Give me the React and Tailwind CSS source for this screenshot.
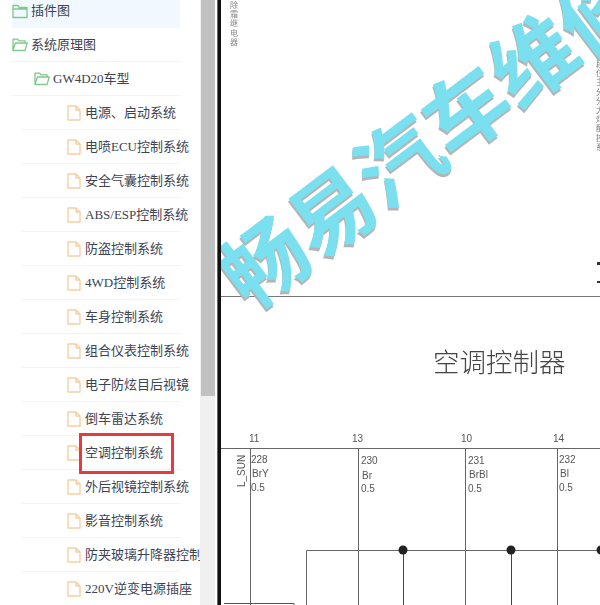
const SERIF = '"Liberation Serif","Noto Sans CJK SC",serif';
const SANS = '"Liberation Sans","Noto Sans CJK SC",sans-serif';

function FolderIcon({ open }) {
  return (
    <svg width="16" height="15" viewBox="0 0 16 15" fill="none" stroke="#7fc98a" strokeWidth="1.3" strokeLinejoin="round" className="shrink-0">
      {open ? (
        <path d="M1 13.5V2.2h4.6l1.3 1.6h6.2v2.2M1 13.5l2.4-7.5h11.8l-2.2 7.5z" />
      ) : (
        <path d="M1 13.5V1.5h5l1.2 2H15v10zM1 5h14" />
      )}
    </svg>
  );
}

function FileIcon() {
  return (
    <svg width="14" height="16" viewBox="0 0 14 16" fill="none" stroke="#f5cfa3" strokeWidth="1.4" strokeLinejoin="round" className="shrink-0">
      <path d="M1 1h8l4 4v10H1zM9 1v4h4" />
    </svg>
  );
}

const files = [
  '电源、启动系统',
  '电喷ECU控制系统',
  '安全气囊控制系统',
  'ABS/ESP控制系统',
  '防盗控制系统',
  '4WD控制系统',
  '车身控制系统',
  '组合仪表控制系统',
  '电子防炫目后视镜',
  '倒车雷达系统',
  '空调控制系统',
  '外后视镜控制系统',
  '影音控制系统',
  '防夹玻璃升降器控制系统',
  '220V逆变电源插座',
];

function Sidebar() {
  return (
    <div className="relative h-[605px] w-[200px] shrink-0 overflow-hidden bg-white text-[13px] text-[#3c4353]" style={{ fontFamily: SERIF }}>
      <div className="mt-[-6px]">
        <div className="ml-3 mr-5 flex h-[34px] items-center gap-[3px] whitespace-nowrap bg-[#f1f8fe]">
          <FolderIcon />
          <span>插件图</span>
        </div>
        <div className="ml-3 mr-5 flex h-[34px] items-center gap-[3px] whitespace-nowrap border-b border-[#f2f2f2]">
          <FolderIcon open />
          <span>系统原理图</span>
        </div>
        <div className="ml-3 mr-5 flex h-[34px] items-center gap-[3px] whitespace-nowrap border-b border-[#f2f2f2] pl-[22px]">
          <FolderIcon open />
          <span>GW4D20车型</span>
        </div>
        {files.map((f) => (
          <div key={f} className="ml-[22px] mr-5 flex h-[34px] items-center gap-1 whitespace-nowrap border-b border-[#f2f2f2] pl-[45px]">
            <FileIcon />
            <span>{f}</span>
          </div>
        ))}
      </div>
      <div className="absolute left-[79px] top-[433px] h-[41px] w-[95px] border-[3px] border-[#e33b3f]" />
    </div>
  );
}

function Scrollbar() {
  return (
    <div className="flex h-[605px] w-[15px] shrink-0 flex-col bg-[#f0f0f0] pl-[1px]">
      <div className="h-[396px] bg-[#c1c1c1]" />
    </div>
  );
}

function Diagram() {
  const t = { fontFamily: SANS, fontSize: 10, fill: '#555' };
  return (
    <svg width="379" height="605" viewBox="221 0 379 605" className="block blur-[0.3px]">
      <g fill="#888" style={{ fontFamily: SANS, fontSize: 8 }}>
        {['除', '霜', '继', '电', '器'].map((c, i) => (
          <text key={c} x="230" y={8 + i * 9.2}>{c}</text>
        ))}
        {['段', '位', '主', '分', '分', '大', '灯', '配', '控', '系'].map((c, i) => (
          <text key={i} x="596" y={67 + i * 9.2} fill="#777">{c}</text>
        ))}
      </g>
      <rect x="597" y="262" width="3" height="3" fill="#333" />
      <rect x="597" y="281" width="3" height="2" fill="#333" />
      <path d="M221 296.5H600" stroke="#777" strokeWidth="1" />
      <text x="433" y="372" style={{ fontFamily: '"Noto Sans CJK SC",sans-serif', fontSize: 26.5, fontWeight: 300 }} fill="#444">空调控制器</text>
      <path d="M221 448.5H600" stroke="#666" strokeWidth="1" />
      <path d="M250.5 448V605M358.5 448V605M465.5 448V605M557.5 448V605" stroke="#666" strokeWidth="1" />
      <path d="M306.500 605V550.500H600" fill="none" stroke="#666" strokeWidth="1" />
      <path d="M403.500 550V605M511.500 550V605" stroke="#444" strokeWidth="1" />
      <circle cx="403" cy="550" r="4.500" fill="#222" />
      <circle cx="511" cy="550" r="4.500" fill="#222" />
      <circle cx="601" cy="550" r="4.500" fill="#222" />
      <path d="M224 603.500H294M294 603.500V605" stroke="#555" strokeWidth="1" />
      <text x="249" y="442" {...t}>11</text>
      <text x="352" y="442" {...t}>13</text>
      <text x="461" y="442" {...t}>10</text>
      <text x="553" y="442" {...t}>14</text>
      <text transform="translate(245 487) rotate(-90)" {...t}>L_SUN</text>
      <text x="251" y="463" {...t}>228</text>
      <text x="252" y="477" {...t}>BrY</text>
      <text x="251" y="491" {...t}>0.5</text>
      <text x="361" y="464" {...t}>230</text>
      <text x="362" y="479" {...t}>Br</text>
      <text x="361" y="492" {...t}>0.5</text>
      <text x="468" y="464" {...t}>231</text>
      <text x="469" y="478" {...t}>BrBl</text>
      <text x="468" y="492" {...t}>0.5</text>
      <text x="559" y="463" {...t}>232</text>
      <text x="560" y="477" {...t}>Bl</text>
      <text x="559" y="491" {...t}>0.5</text>
    </svg>
  );
}

function Watermark() {
  return (
    <div
      className="absolute left-[-43px] top-[90px] origin-center rotate-[-37deg] whitespace-nowrap text-[84px] font-bold leading-none text-[#7adfee]"
      style={{ fontFamily: '"Noto Sans CJK SC",sans-serif', textShadow: '-2px 2px 0 #b4b4b4' }}
    >
      畅易汽车维修
    </div>
  );
}

export default function App() {
  return (
    <div className="flex h-[605px] w-[600px] overflow-hidden bg-white">
      <Sidebar />
      <Scrollbar />
      <div className="w-[2px] shrink-0 bg-white" />
      <div className="w-[4px] shrink-0 border-l border-[#666] bg-[#111]" />
      <div className="relative h-[605px] flex-1 overflow-hidden bg-white">
        <Diagram />
        <Watermark />
      </div>
    </div>
  );
}
